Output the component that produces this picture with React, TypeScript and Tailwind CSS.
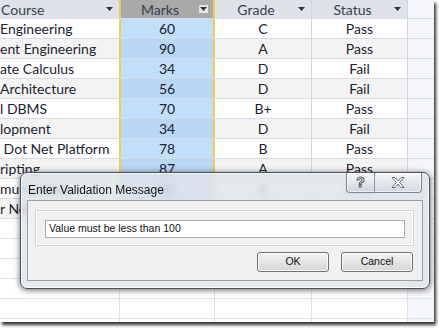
import React from "react";

const rows = [
  ["Engineering", "60", "C", "Pass"],
  ["ent Engineering", "90", "A", "Pass"],
  ["ate Calculus", "34", "D", "Fail"],
  ["Architecture", "56", "D", "Fail"],
  ["l DBMS", "70", "B+", "Pass"],
  ["lopment", "34", "D", "Fail"],
  ["\u00a0Dot Net Platform", "78", "B", "Pass"],
  ["ripting", "87", "A", "Pass"],
  ["munication", "85", "A", "Pass"],
  ["r Networks", "72", "B", "Pass"],
];

function Arrow({ boxed }: { boxed?: boolean }) {
  return (
    <span
      className={
        "mr-[5px] flex h-[8px] w-[9px] shrink-0 items-center justify-center " +
        (boxed ? "bg-white/70" : "")
      }
    >
      <svg width="7" height="4" viewBox="0 0 7 4">
        <path d="M0 0h7L3.5 4z" fill="#2d3642" />
      </svg>
    </span>
  );
}

function Header() {
  return (
    <div className="flex h-[19px] border-b border-[#d6dce5] text-[#36414e]">
      <div className="flex w-[119px] items-center bg-[#dfe3e9]">
        <span className="flex-1 pl-px">Course</span>
        <Arrow />
      </div>
      <div className="flex w-[96px] items-center border-x-2 border-[#f2cd4b] bg-[#a9a9a9]">
        <span className="flex-1 text-center">Marks</span>
        <Arrow boxed />
      </div>
      <div className="flex w-[97px] items-center border-r border-[#cfd6e2] bg-[#dfe3e9]">
        <span className="flex-1 text-center">Grade</span>
        <Arrow />
      </div>
      <div className="flex w-[96px] items-center border-r border-[#cfd6e2] bg-[#dfe3e9]">
        <span className="flex-1 text-center">Status</span>
        <Arrow />
      </div>
      <div className="flex-1 bg-[#f4f6fb]" />
    </div>
  );
}

function DataRow({ cells, i }: { cells: string[]; i: number }) {
  const even = i % 2 === 1;
  const bg = even ? "bg-[#f3f3f3]" : "bg-white";
  return (
    <div className="flex h-[20px] border-b border-[#d6dce5] text-[#1c2230]">
      <div className={"flex w-[119px] items-center overflow-hidden whitespace-nowrap " + bg}>
        {cells[0]}
      </div>
      <div
        className={
          "flex w-[96px] items-center justify-center border-x-2 border-[#f2cd4b] " +
          (even ? "bg-[#b7d7f5]" : "bg-[#c2dffa]")
        }
      >
        {cells[1]}
      </div>
      <div className={"flex w-[97px] items-center justify-center border-r border-[#cfd6e2] " + bg}>
        {cells[2]}
      </div>
      <div className={"flex w-[96px] items-center justify-center border-r border-[#cfd6e2] " + bg}>
        {cells[3]}
      </div>
      <div className="flex-1 bg-[#f4f6fb]" />
    </div>
  );
}

function EmptyRow() {
  return (
    <div className="flex h-[20px] border-b border-[#dde2ea]">
      <div className="w-[119px] bg-white" />
      <div className="w-[96px] border-l border-r border-[#dde2ea] bg-white" />
      <div className="w-[97px] border-r border-[#dde2ea] bg-white" />
      <div className="w-[96px] border-r border-[#dde2ea] bg-white" />
      <div className="flex-1 bg-[#f4f6fb]" />
    </div>
  );
}

function Dialog() {
  return (
    <div className="absolute left-[20px] top-[172px] flex h-[117px] w-[410px] flex-col rounded-[7px] border border-[#4b5056] bg-[#dde4ea]/80 shadow-[inset_0_0_0_1px_rgba(255,255,255,0.75),0_1px_6px_rgba(0,0,0,0.6)] backdrop-blur-[3px] font-['Liberation_Sans',Arial,sans-serif]">
      <div className="flex h-[27px] justify-between">
        <span className="pl-[7px] pt-[8px] text-[12px] text-[#111]">Enter Validation Message</span>
        <div className="mr-[7px] flex h-[20px] rounded-b-[4px] border border-t-0 border-[#7d8791] bg-gradient-to-b from-white/70 to-[#c9d1d9]/70 shadow-[inset_0_0_0_1px_rgba(255,255,255,0.6)]">
          <div className="flex w-[28px] items-center justify-center border-r border-[#8e97a0] text-[14px] font-bold text-white [-webkit-text-stroke:1px_#5a5f66]">
            ?
          </div>
          <div className="flex w-[46px] items-center justify-center">
            <svg width="14" height="11" viewBox="0 0 14 11">
              <path
                d="M1 .5h3l3 3.5 3-3.5h3L8.6 5.5 13 10.5h-3L7 7l-3 3.5H1l4.4-5z"
                fill="#fff"
                stroke="#5a5f66"
                strokeWidth="0.9"
              />
            </svg>
          </div>
        </div>
      </div>
      <div className="mx-[6px] mb-[7px] flex flex-1 flex-col border border-[#9a9fa5] bg-[#f0f0f0] pl-[7px] pr-[8px] pt-[9px]">
        <div className="h-[36px] border border-[#cfd5dc] pl-[9px] pr-[8px] pt-[9px] shadow-[inset_0_0_0_1px_#fff]">
          <div className="flex h-[18px] items-center border border-[#a7aeb7] bg-white pl-[3px] text-[10.5px] text-[#111]">
            Value must be less than 100
          </div>
        </div>
        <div className="mt-[6px] flex justify-end gap-[12px] pr-px">
          <button className="h-[20px] w-[72px] rounded-[3px] border border-[#707070] bg-gradient-to-b from-[#f4f4f4] to-[#d6d6d6] text-[10.5px] text-[#111] shadow-[inset_0_0_0_1px_rgba(255,255,255,0.8)]">
            OK
          </button>
          <button className="h-[20px] w-[72px] rounded-[3px] border border-[#707070] bg-gradient-to-b from-[#f4f4f4] to-[#d6d6d6] text-[10.5px] text-[#111] shadow-[inset_0_0_0_1px_rgba(255,255,255,0.8)]">
            Cancel
          </button>
        </div>
      </div>
    </div>
  );
}

export default function App() {
  return (
    <div className="h-[328px] w-[439px] overflow-hidden bg-white">
      <div className="relative h-[322px] w-[434px] overflow-hidden bg-white shadow-[2px_3px_3px_rgba(0,0,0,0.8)] font-['Lato',sans-serif] text-[14px]">
        <Header />
        {rows.map((r, i) => (
          <DataRow key={i} cells={r} i={i} />
        ))}
        {[0, 1, 2, 3, 4, 5].map((k) => (
          <EmptyRow key={k} />
        ))}
        <Dialog />
      </div>
    </div>
  );
}
